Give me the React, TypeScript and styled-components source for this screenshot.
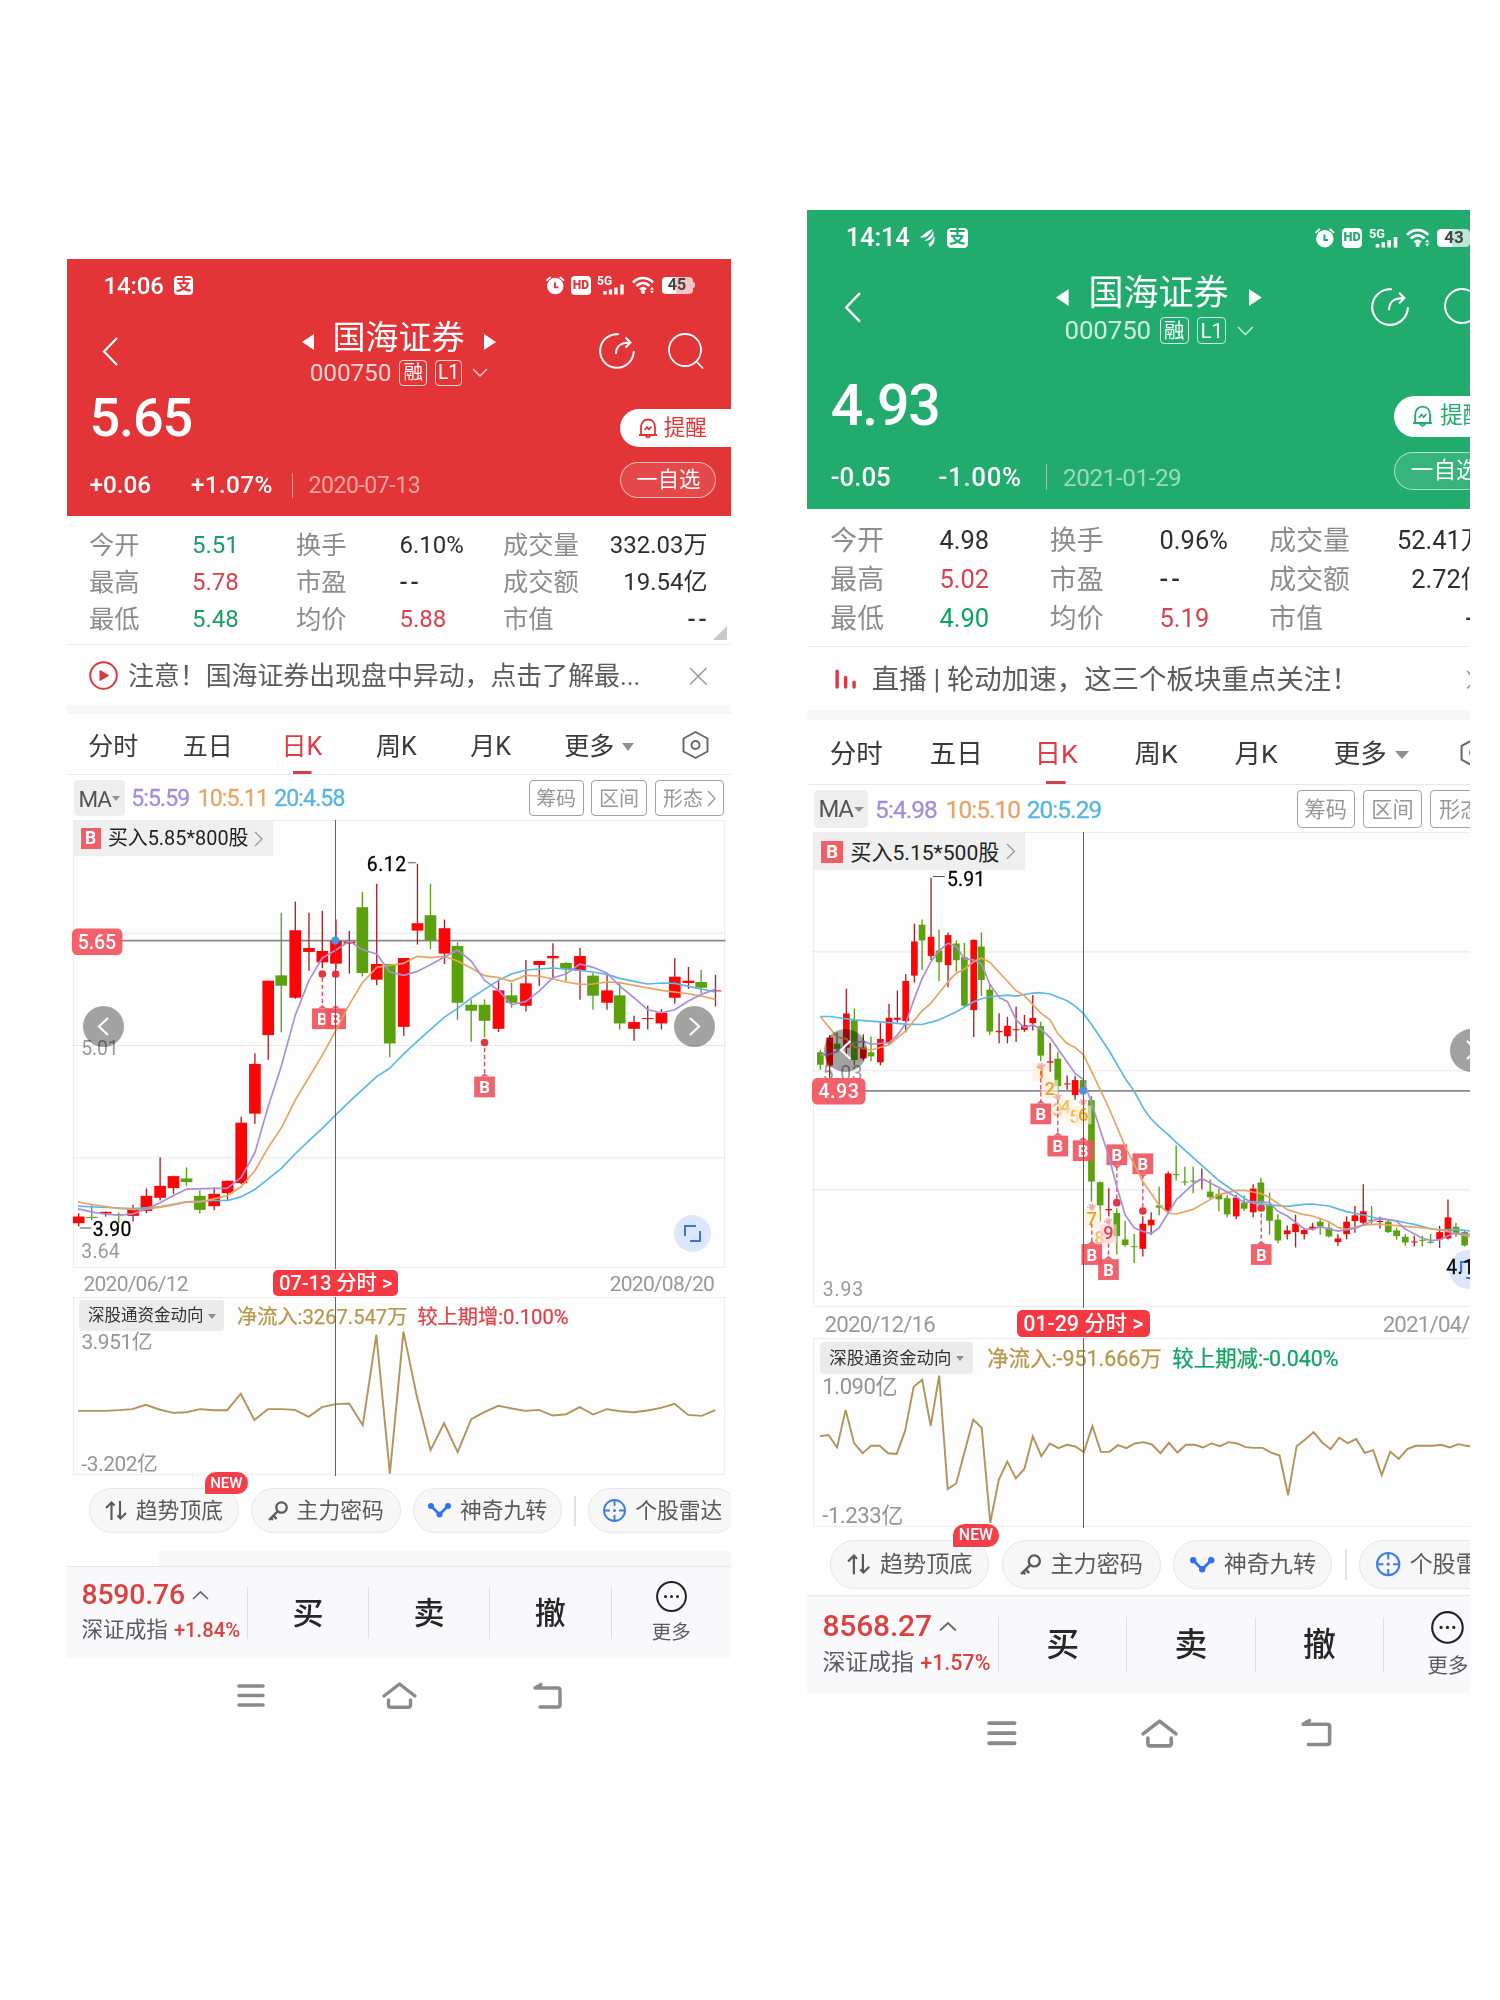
import React from 'react';
import styled, { createGlobalStyle, css } from 'styled-components';

/* One design unit; each phone sets its own --u so the same layout can be shown at two sizes. */
const u = (n: number) => `calc(var(--u) * ${n})`;

const RED = '#e33537';
const GREEN = '#21ac6e';

const Global = createGlobalStyle`
  * { box-sizing: border-box; }
  body { margin: 0; background: #fff; }
`;

const Stage = styled.main`
  display: flex;
  align-items: flex-start;
  gap: 76px;
  width: 1500px;
  height: 2000px;
  padding-left: 67px;
  overflow: hidden;
  background: #fff;
  font-family: Roboto, 'Noto Sans CJK SC', sans-serif;
`;

const Frame = styled.section<{ $top: number; $width: number; $unit: number }>`
  --u: ${(p) => p.$unit}px;
  flex: none;
  width: ${(p) => p.$width}px;
  margin-top: ${(p) => p.$top}px;
  overflow: hidden;
`;

const Screen = styled.div`
  display: flex;
  flex-direction: column;
  width: ${u(664)};
  background: #fff;
  color: #333;
  white-space: nowrap;
  line-height: 1;
`;

/* ---------- header ---------- */

const Header = styled.header<{ $bg: string }>`
  background: ${(p) => p.$bg};
  color: #fff;
`;

const StatusBar = styled.div`
  display: flex;
  align-items: center;
  height: ${u(52)};
  padding: 0 ${u(38.5)} 0 ${u(36.5)};
`;

const Clock = styled.span`
  font-size: ${u(24)};
  font-weight: 500;
  letter-spacing: ${u(-0.1)};
  padding-top: ${u(1)};
  margin-right: ${u(10)};
`;

const PayIcon = styled.span<{ $fg: string }>`
  display: grid;
  place-items: center;
  width: ${u(19.5)};
  height: ${u(19)};
  border-radius: ${u(4)};
  background: #fff;
  color: ${(p) => p.$fg};
  font-size: ${u(16)};
  font-weight: 700;
`;

const StatusRight = styled.div`
  display: flex;
  align-items: center;
  margin-left: auto;
  gap: ${u(6.6)};
`;

const HdIcon = styled(PayIcon)`
  font-size: ${u(12)};
  font-weight: 900;
`;

const Battery = styled.span`
  display: grid;
  place-items: center;
  position: relative;
  width: ${u(31)};
  height: ${u(17)};
  border-radius: ${u(4)};
  background: linear-gradient(90deg, #fff 45%, rgba(255, 255, 255, 0.7) 45%);
  color: #444;
  font-size: ${u(16)};
  font-weight: 700;
  &::after {
    content: '';
    position: absolute;
    left: 100%;
    width: ${u(2)};
    height: ${u(6)};
    border-radius: 0 2px 2px 0;
    background: rgba(255, 255, 255, 0.7);
  }
`;

const Glyph = styled.svg<{ $w: number; $h: number }>`
  flex: none;
  display: block;
  width: ${(p) => u(p.$w)};
  height: ${(p) => u(p.$h)};
  fill: none;
  stroke: currentColor;
  overflow: visible;
`;

const TitleBar = styled.div`
  display: grid;
  grid-template-columns: ${u(130)} 1fr ${u(130)};
  align-items: center;
  height: ${u(80)};
  padding: 0 ${u(27)} 0 ${u(35)};
`;

const TitleStack = styled.div`
  display: flex;
  flex-direction: column;
  align-items: center;
  gap: ${u(4)};
  padding-top: ${u(4)};
  margin-right: ${u(9)};
`;

const TitleLine = styled.div`
  display: flex;
  align-items: center;
  gap: ${u(19)};
  height: ${u(36)};
  font-size: ${u(33)};
  svg { fill: #fff; stroke: none; margin-top: ${u(8)}; }
`;

const CodeLine = styled.div`
  display: flex;
  align-items: center;
  height: ${u(27)};
  gap: ${u(8)};
  font-size: ${u(24.4)};
  letter-spacing: ${u(-0.1)};
  color: rgba(255, 255, 255, 0.78);
`;

const MarketTag = styled.span`
  display: grid;
  place-items: center;
  width: ${u(27.5)};
  height: ${u(25.5)};
  border: 1.4px solid rgba(255, 255, 255, 0.8);
  border-radius: ${u(4)};
  color: #fff;
  font-size: ${u(19.5)};
`;

const TitleActions = styled.div`
  display: flex;
  justify-content: flex-end;
  gap: ${u(33.5)};
`;

const Quote = styled.div<{ $extra: number }>`
  display: flex;
  justify-content: space-between;
  height: ${(p) => u(124.7 + p.$extra)};
  padding: ${(p) => u(p.$extra)} 0 ${u(18.2)} ${u(22.5)};
`;

const QuoteFigures = styled.div`
  display: flex;
  flex-direction: column;
  justify-content: space-between;
`;

const Price = styled.div`
  font-size: ${u(54)};
  font-weight: 500;
  line-height: ${u(54)};
  letter-spacing: ${u(-1.1)};
`;

const ChangeRow = styled.div`
  display: flex;
  align-items: center;
  height: ${u(25)};
  font-size: ${u(24.3)};
  font-weight: 500;
`;

const Change = styled.span<{ $w: number; $track?: number }>`
  width: ${(p) => u(p.$w)};
  padding-top: ${u(1)};
  letter-spacing: ${(p) => u(p.$track || 0)};
`;

const QuoteDate = styled.span`
  padding: ${u(1)} 0 0 ${u(15.5)};
  border-left: 1px solid rgba(255, 255, 255, 0.45);
  line-height: ${u(24)};
  font-size: ${u(23)};
  font-weight: 400;
  letter-spacing: ${u(-0.45)};
  color: rgba(255, 255, 255, 0.55);
`;

const QuoteActions = styled.div`
  display: flex;
  flex-direction: column;
  justify-content: flex-end;
  gap: ${u(14.3)};
  width: ${u(110.7)};
`;

const AlertButton = styled.div<{ $fg: string }>`
  display: flex;
  align-items: center;
  gap: ${u(6)};
  height: ${u(38.4)};
  padding-left: ${u(17.5)};
  border-radius: ${u(20)} 0 0 ${u(20)};
  background: #fff;
  color: ${(p) => p.$fg};
  font-size: ${u(21.5)};
`;

const WatchButton = styled.div`
  display: grid;
  place-items: center;
  width: ${u(96)};
  height: ${u(36)};
  padding-top: ${u(1)};
  border: 1px solid rgba(255, 255, 255, 0.6);
  border-radius: ${u(18)};
  background: rgba(255, 255, 255, 0.1);
  font-size: ${u(21.3)};
`;

/* ---------- statistics ---------- */

const Stats = styled.div`
  position: relative;
  display: grid;
  grid-template-columns: ${u(103)} ${u(104)} ${u(103.5)} ${u(103.5)} ${u(90)} 1fr;
  grid-auto-rows: ${u(37)};
  align-items: center;
  height: ${u(129.8)};
  padding: ${u(11)} ${u(23.5)} 0 ${u(22)};
  border-bottom: 1.5px solid #ececec;
  font-size: ${u(24)};
`;

const StatLabel = styled.span`
  padding-top: ${u(0.6)};
  color: #8c8c8c;
  font-size: ${u(25.3)};
`;

const StatValue = styled.span<{ $tone?: string; $end?: boolean; $dash?: boolean }>`
  color: ${(p) => p.$tone || '#2e2e2e'};
  text-align: ${(p) => (p.$end ? 'right' : 'left')};
  ${(p) => p.$dash && css`
    font-weight: 500;
    letter-spacing: ${u(2.8)};
    margin-right: ${u(-2)};
  `}
`;

const ExpandCorner = styled.i`
  position: absolute;
  right: ${u(4)};
  bottom: ${u(4)};
  border-style: solid;
  border-width: 0 0 ${u(14)} ${u(14)};
  border-color: transparent transparent #c9c9c9 transparent;
`;

/* ---------- notice + tabs ---------- */

const Notice = styled.div`
  display: flex;
  align-items: center;
  height: ${u(59.7)};
  padding: ${u(1)} ${u(25)} 0 ${u(22)};
  color: #5c5c5c;
  font-size: ${u(25.9)};
`;

const NoticeIcon = styled.span`
  display: flex;
  justify-content: center;
  width: ${u(29)};
  margin-right: ${u(10)};
  color: #dc3742;
`;

const NoticeText = styled.span`
  flex: 1;
  padding-top: ${u(3)};
`;

const Band = styled.div`
  height: ${u(8.7)};
  background: #f7f7f7;
`;

const Tabs = styled.nav`
  display: grid;
  grid-template-columns: repeat(5, ${u(94.3)}) ${u(123)} 1fr;
  height: ${u(61.6)};
  margin-left: ${u(-1)};
  padding-left: ${u(0.2)};
  border-bottom: 1.5px solid #e9e9e9;
  font-size: ${u(25)};
`;

const Tab = styled.div<{ $active?: boolean }>`
  display: flex;
  align-items: center;
  justify-content: center;
  gap: ${u(8)};
  padding-top: ${u(5.5)};
  color: ${(p) => (p.$active ? '#e23943' : '#3a3a3a')};
  svg { margin-top: ${u(-3)}; }
  ${(p) =>
    p.$active &&
    css`
      background: linear-gradient(#c9454d, #c9454d) center bottom / ${u(18.5)} ${u(3)} no-repeat;
    `}
`;

const Caret = styled.i<{ $s: number }>`
  border-style: solid;
  border-width: ${(p) => u(p.$s)} ${(p) => u(p.$s * 0.85)} 0;
  border-color: #8f8f8f transparent transparent;
`;

/* ---------- moving average row ---------- */

const MaRow = styled.div`
  display: flex;
  align-items: center;
  height: ${u(44.7)};
  padding: ${u(0.6)} ${u(7.5)} 0 ${u(7)};
  font-size: ${u(23)};
`;

const MaPicker = styled.span`
  display: flex;
  align-items: center;
  justify-content: center;
  gap: ${u(1.5)};
  width: ${u(50.7)};
  height: ${u(36.4)};
  margin-right: ${u(6.5)};
  padding-top: ${u(1.5)};
  border-radius: ${u(4)};
  background: #eee;
  color: #555;
  font-size: ${u(22.5)};
  letter-spacing: ${u(-1.2)};
`;

const MaValue = styled.span<{ $c: string; $w: number }>`
  width: ${(p) => u(p.$w)};
  padding-top: ${u(1.8)};
  color: ${(p) => p.$c};
  letter-spacing: ${u(-0.85)};
  -webkit-text-stroke: 0.3px currentColor;
`;

const MaTools = styled.div`
  display: flex;
  gap: ${u(7.7)};
  margin-left: auto;
`;

const MaTool = styled.span<{ $w: number }>`
  display: flex;
  align-items: center;
  justify-content: center;
  gap: ${u(5)};
  width: ${(p) => u(p.$w)};
  height: ${u(36.4)};
  padding-top: ${u(1.5)};
  border: 1.2px solid #a0a0a0;
  border-radius: ${u(4)};
  color: #979797;
  font-size: ${u(20)};
`;

/* ---------- charts ---------- */

const ChartBox = styled.div<{ $h: number }>`
  position: relative;
  height: ${(p) => u(p.$h)};
  margin: 0 ${u(6)} 0 ${u(5.5)};
  border: 1.5px solid #ececec;
  background: #fdfdfd;
`;

const Plot = styled.svg`
  position: absolute;
  inset: -1.5px;
  width: calc(100% + 3px);
  height: calc(100% + 3px);
`;

const TradeNote = styled.div`
  position: absolute;
  left: 0;
  top: 0;
  display: flex;
  align-items: center;
  gap: ${u(7)};
  width: ${u(199.5)};
  height: ${u(35)};
  padding-left: ${u(7)};
  background: #efefef;
  color: #222;
  font-size: ${u(19.9)};
`;

const TradeText = styled.span`
  padding-top: ${u(1.5)};
`;

const BuyBadge = styled.b`
  display: grid;
  place-items: center;
  width: ${u(20.4)};
  height: ${u(20.4)};
  background: #ef5f68;
  color: #fff;
  font-size: ${u(17.5)};
`;

const RoundButton = styled.span<{ $x: number; $y: number; $s: number; $bg: string; $fg: string; $blend?: boolean }>`
  position: absolute;
  left: ${(p) => u(p.$x)};
  top: ${(p) => u(p.$y)};
  display: grid;
  place-items: center;
  width: ${(p) => u(p.$s)};
  height: ${(p) => u(p.$s)};
  border-radius: 50%;
  background: ${(p) => p.$bg};
  color: ${(p) => p.$fg};
  mix-blend-mode: ${(p) => (p.$blend ? 'multiply' : 'normal')};
`;

const DateRow = styled.div`
  position: relative;
  display: flex;
  align-items: center;
  justify-content: space-between;
  height: ${u(29.3)};
  margin: 0 ${u(6)} 0 ${u(5.5)};
  padding: ${u(3)} ${u(11)} 0 ${u(11)};
  color: #999;
  font-size: ${u(21)};
  letter-spacing: ${u(-0.75)};
`;

const DatePill = styled.span<{ $x: number }>`
  position: absolute;
  left: ${(p) => u(p.$x - 62.5)};
  top: ${u(2.2)};
  display: grid;
  place-items: center;
  width: ${u(125)};
  height: ${u(25.7)};
  border-radius: ${u(5)};
  background: #f63842;
  color: #fff;
  font-size: ${u(20.3)};
  font-weight: 500;
  letter-spacing: ${u(-0.1)};
`;

const FlowHead = styled.div`
  position: relative;
  display: flex;
  align-items: center;
  padding: ${u(2)} 0 0 ${u(5.5)};
  font-size: ${u(20.2)};
`;

const FlowPicker = styled.span`
  display: flex;
  align-items: center;
  gap: ${u(4)};
  width: ${u(145)};
  height: ${u(30.7)};
  margin-right: ${u(13)};
  padding: ${u(1.5)} 0 0 ${u(9)};
  border-radius: ${u(4)};
  background: #ebebeb;
  color: #333;
  font-size: ${u(16.5)};
`;

const FlowValue = styled.span<{ $c: string }>`
  padding-top: ${u(2)};
  margin-right: ${u(10)};
  color: ${(p) => p.$c};
  -webkit-text-stroke: 0.25px currentColor;
`;

/* ---------- feature chips ---------- */

const Chips = styled.div`
  display: flex;
  align-items: center;
  gap: ${u(12)};
  padding: ${u(12.4)} 0 0 ${u(22)};
`;

const Chip = styled.div`
  position: relative;
  flex: none;
  display: flex;
  align-items: center;
  justify-content: center;
  gap: ${u(9)};
  width: ${u(149.8)};
  height: ${u(45.6)};
  border: 1.3px solid #e6e6e6;
  border-radius: ${u(23)};
  background: #f7f7f7;
  color: #5a5a5a;
  font-size: ${u(21.8)};
`;

const NewTag = styled.span`
  position: absolute;
  right: ${u(-11)};
  top: ${u(-17.5)};
  display: grid;
  place-items: center;
  width: ${u(45)};
  height: ${u(23.5)};
  border: 1px solid #fff;
  border-radius: ${u(12)} ${u(12)} ${u(12)} ${u(2)};
  background: #f43e4a;
  color: #fff;
  font-size: ${u(15)};
  font-weight: 500;
`;

const ChipRule = styled.i`
  flex: none;
  width: 1.5px;
  height: ${u(30)};
  background: #e2e2e2;
`;

const Gap = styled.div<{ $h: number }>`
  display: flex;
  align-items: flex-end;
  height: ${(p) => u(p.$h)};
`;

const Peek = styled.div`
  width: 100%;
  height: ${u(15)};
  margin-left: ${u(92)};
  border-radius: ${u(5)} 0 0 0;
  background: #f7f7f7;
`;

/* ---------- trading bar ---------- */

const TradeBar = styled.footer`
  display: grid;
  grid-template-columns: ${u(181)} ${u(121)} ${u(121)} ${u(121.5)} 1fr;
  height: ${u(92.4)};
  padding: ${u(20)} 0;
  border-top: 1.3px solid #e6e6e8;
  background: #f9f9fb;
`;

const IndexCell = styled.div`
  display: flex;
  flex-direction: column;
  justify-content: center;
  gap: ${u(10)};
  height: ${u(52)};
  padding-left: ${u(14.5)};
  padding-bottom: ${u(4)};
  border-right: 1.3px solid #dedee0;
`;

const IndexLine = styled.div`
  display: flex;
  align-items: center;
  gap: ${u(8)};
  color: #dc4140;
  font-size: ${u(28.3)};
  font-weight: 500;
  letter-spacing: ${u(-0.15)};
  svg { color: #666; }
`;

const IndexName = styled.div`
  display: flex;
  align-items: center;
  gap: ${u(6)};
  color: #5c5c60;
  font-size: ${u(21.6)};
`;

const IndexPct = styled.span`
  color: #dc4140;
  font-size: ${u(20.2)};
  font-weight: 500;
`;

const TradeCell = styled.div`
  display: grid;
  place-items: center;
  height: ${u(52)};
  padding-top: ${u(2)};
  border-right: 1.3px solid #dedee0;
  color: #262626;
  font-size: ${u(31)};
  font-weight: 500;
`;

const MoreCell = styled.div`
  display: flex;
  flex-direction: column;
  align-items: center;
  gap: ${u(11)};
  margin-top: ${u(-5.5)};
  color: #222;
  span { color: #5c5c60; font-size: ${u(19.5)}; }
`;

const SystemNav = styled.div`
  display: grid;
  grid-template-columns: ${u(148)} ${u(148)} ${u(148)};
  justify-content: center;
  justify-items: center;
  align-items: center;
  height: ${u(75.6)};
  color: #8a8a8a;
`;

/* ---------- chart drawing ---------- */

/* x, high, body top, body bottom, low, r|g */
type Candle = [number, number, number, number, number, 'r' | 'g'];

const candles = (src: string): Candle[] =>
  src
    .trim()
    .split(/\s+/)
    .map((row) => {
      const c = row.split(',');
      return [+c[0], +c[1], +c[2], +c[3], +c[4], c[5] as 'r' | 'g'];
    });

const series = (x0: number, step: number, ys: number[]) =>
  ys.map((y, i) => `${(x0 + step * i).toFixed(1)},${y}`).join(' ');

interface Mark {
  x: number;
  y: number;
  from?: number;
  dot?: number;
  below?: boolean;
}

interface Count {
  x: number;
  y: number;
  n: number;
  faint?: boolean;
}

interface Kline {
  box: [number, number, number, number];
  grid: number[];
  bodyWidth: number;
  candles: Candle[];
  ma5: string;
  ma10: string;
  ma20: string;
  cross: [number, number];
  crossLabel: string;
  marks: Mark[];
  counts: Count[];
  arcs: [number, number][];
  labels: { x: number; y: number; w?: number; t: string; c: string }[];
  leaders: string;
  pillTop: number;
}

interface PhoneData {
  top: number;
  width: number;
  unit: number;
  bg: string;
  time: string;
  swoosh: boolean;
  battery: string;
  extra: number;
  price: string;
  delta: string;
  pct: string;
  pctTrack: number;
  date: string;
  stats: [string, string, string?][];
  corner: boolean;
  notice: string;
  noticeKind: 'play' | 'bars';
  ma: string[];
  trade: string;
  k: Kline;
  prev: [number, number];
  next: [number, number];
  full: [number, number];
  from: string;
  to: string;
  pill: string;
  pillX: number;
  flow: string;
  flowDelta: string;
  flowTone: string;
  flowBox: [number, number, number, number];
  flowMax: string;
  flowMin: string;
  flowCross: number;
  flowPts: string;
  gap: number;
  peek: boolean;
  index: string;
  indexPct: string;
}

const UP = '#d9414c';
const DOWN = '#1a9f61';

const left: PhoneData = {
  top: 259,
  width: 664,
  unit: 1,
  bg: RED,
  time: '14:06',
  swoosh: false,
  battery: '45',
  extra: 0,
  price: '5.65',
  delta: '+0.06',
  pct: '+1.07%',
  pctTrack: 0.35,
  date: '2020-07-13',
  stats: [
    ['今开', '5.51', DOWN], ['换手', '6.10%'], ['成交量', '332.03万'],
    ['最高', '5.78', UP], ['市盈', '--'], ['成交额', '19.54亿'],
    ['最低', '5.48', DOWN], ['均价', '5.88', UP], ['市值', '--'],
  ],
  corner: true,
  notice: '注意！国海证券出现盘中异动，点击了解最...',
  noticeKind: 'play',
  ma: ['5:5.59', '10:5.11', '20:4.58'],
  trade: '买入5.85*800股',
  k: {
    box: [22, 28, 1958, 1344],
    grid: [367, 703, 1039],
    bodyWidth: 35,
    candles: candles(`
      42,1205,1215,1235,1245,r 81,1180,1216,1219,1226,g 123,1200,1201,1206,1215,r 162,1203,1208,1211,1235,g
      205,1180,1195,1213,1230,r 245,1131,1153,1198,1205,r 286,1038,1123,1159,1167,r 326,1093,1094,1130,1147,r
      365,1068,1101,1112,1123,g 405,1136,1153,1195,1206,g 448,1127,1147,1184,1196,r 488,1107,1108,1145,1165,r
      529,916,934,1115,1118,r 570,726,758,907,937,r 610,509,509,672,746,r 649,306,493,524,663,g
      691,272,358,560,563,r 732,306,411,423,479,r 772,300,420,454,472,r 813,326,390,458,474,r
      853,360,392,398,488,r 892,243,289,486,496,g 935,219,459,506,523,r 974,459,459,697,738,g
      1016,441,441,647,674,r 1057,159,337,359,401,r 1096,219,313,389,415,g 1138,326,352,428,459,r
      1177,394,405,575,626,g 1218,565,581,599,692,g 1258,565,581,629,678,g 1300,510,538,653,663,r
      1339,515,553,575,590,g 1382,447,517,584,601,r 1422,450,450,462,525,r 1463,397,435,442,500,r
      1502,453,456,474,511,g 1544,411,435,479,566,r 1583,486,494,554,596,g 1625,490,538,575,596,r
      1663,517,553,637,655,g 1706,614,633,653,689,r 1747,584,621,624,655,r 1788,594,605,637,655,r
      1828,441,497,560,577,r 1869,468,509,516,534,r 1907,477,513,530,546,g 1950,492,538,541,586,r`),
    ma5: '40,1192 81,1201 123,1208 162,1211 205,1207 245,1192 286,1174 326,1152 365,1133 488,1130 529,1098 570,1024 610,885 649,765 691,612 732,508 772,441 813,417 853,391 892,416 935,429 974,483 1016,493 1057,481 1096,461 1138,438 1177,417 1218,450 1258,508 1300,538 1339,581 1382,571 1422,540 1463,500 1502,489 1544,459 1583,469 1625,486 1663,525 1706,560 1747,596 1788,605 1828,596 1869,570 1907,550 1950,535',
    ma10: '40,1171 81,1179 123,1185 162,1191 205,1194 245,1193 286,1187 326,1180 365,1172 405,1171 448,1162 488,1152 529,1126 570,1078 610,1008 649,950 691,866 732,798 772,732 813,657 853,580 892,515 935,469 1016,457 1057,436 1096,440 1138,436 1177,450 1218,471 1258,494 1300,500 1339,511 1382,493 1422,495 1463,504 1502,513 1544,520 1583,519 1625,513 1663,515 1706,523 1788,538 1869,548 1907,555 1950,565',
    ma20: '40,1184 123,1188 205,1191 286,1186 365,1171 448,1167 488,1167 529,1156 570,1134 610,1102 649,1071 691,1027 732,988 772,951 813,910 853,871 935,796 974,771 1016,728 1057,690 1138,618 1177,592 1218,561 1258,535 1300,508 1339,489 1382,477 1463,471 1544,478 1583,483 1625,490 1663,502 1706,511 1747,519 1788,516 1828,517 1869,526 1950,543',
    cross: [811, 389],
    crossLabel: '5.65',
    marks: [
      { x: 772, y: 623, from: 500, dot: 489 },
      { x: 812, y: 623, dot: 489 },
      { x: 1258, y: 827, from: 710, dot: 694 },
    ],
    counts: [],
    arcs: [],
    labels: [
      { x: 905, y: 181, w: 118, t: '6.12', c: '#000' },
      { x: 84, y: 1274, w: 116, t: '3.90', c: '#000' },
      { x: 50, y: 732, w: 112, t: '5.01', c: '#999' },
      { x: 50, y: 1340, w: 115, t: '3.64', c: '#999' },
    ],
    leaders: 'M1028 156h24 M46 1249h34',
    pillTop: 353,
  },
  prev: [10.7, 186],
  next: [601.6, 186],
  full: [601.5, 395],
  from: '2020/06/12',
  to: '2020/08/20',
  pill: '07-13 分时 >',
  pillX: 263,
  flow: '净流入:3267.547万',
  flowDelta: '较上期增:0.100%',
  flowTone: '#e0424b',
  flowBox: [29, 112, 1504, 533],
  flowMax: '3.951亿',
  flowMin: '-3.202亿',
  flowCross: 635,
  flowPts: series(43, 31.2, [451, 451, 451, 449, 446, 433, 447, 457, 455, 446, 449, 449, 400, 478, 446, 446, 448, 469, 440, 431, 429, 494, 224, 638, 215, 410, 568, 488, 574, 476, 454, 436, 444, 451, 448, 465, 461, 440, 462, 446, 452, 455, 450, 442, 430, 463, 466, 449]),
  gap: 32.3,
  peek: true,
  index: '8590.76',
  indexPct: '+1.84%',
};

const right: PhoneData = {
  top: 210,
  width: 663,
  unit: 1.0605,
  bg: GREEN,
  time: '14:14',
  swoosh: true,
  battery: '43',
  extra: 25.7,
  price: '4.93',
  delta: '-0.05',
  pct: '-1.00%',
  pctTrack: 0.7,
  date: '2021-01-29',
  stats: [
    ['今开', '4.98'], ['换手', '0.96%'], ['成交量', '52.41万'],
    ['最高', '5.02', UP], ['市盈', '--'], ['成交额', '2.72亿'],
    ['最低', '4.90', '#0ca45e'], ['均价', '5.19', UP], ['市值', '--'],
  ],
  corner: false,
  notice: '直播 | 轮动加速，这三个板块重点关注！',
  noticeKind: 'bars',
  ma: ['5:4.98', '10:5.10', '20:5.29'],
  trade: '买入5.15*500股',
  k: {
    box: [22, -24, 2078, 1422],
    grid: [334, 689, 1045],
    bodyWidth: 20,
    candles: candles(`
      47,627,634,671,686,g 75,582,590,672,710,r 97,575,608,624,632,g 125,444,518,620,640,r 149,503,538,657,672,g
      176,580,620,652,658,r 199,587,634,646,661,g 227,547,594,664,673,r 253,489,531,605,613,r 278,450,531,537,545,r
      303,400,421,541,574,r 329,250,303,405,426,r 352,237,253,300,388,g 379,113,289,346,358,r 403,267,330,365,421,g
      430,276,284,374,440,r 455,300,309,359,393,g 479,307,350,495,500,g 507,297,298,508,588,r 530,276,318,418,465,g
      555,430,447,572,583,g 583,517,570,574,607,r 608,528,555,586,607,r 634,497,565,568,603,r 659,522,553,567,573,r
      684,463,531,547,569,r 708,543,556,644,661,g 736,606,661,665,692,r 759,632,653,735,756,g 787,703,727,730,746,r
      811,704,717,762,776,r 835,717,717,750,760,g 860,764,777,1020,1080,g 886,1020,1022,1091,1139,g 912,1040,1102,1106,1124,r
      936,1100,1114,1183,1238,g 961,1137,1193,1210,1215,g 988,1177,1213,1215,1263,g 1014,1124,1146,1221,1244,r 1039,1112,1134,1151,1180,r
      1063,1035,1091,1098,1121,g 1090,990,996,1107,1112,r 1114,912,998,1001,1017,g 1140,976,1020,1022,1032,g 1165,976,1017,1020,1055,g
      1191,981,1013,1015,1043,r 1216,1014,1050,1067,1072,g 1242,1042,1057,1073,1109,g 1267,1060,1070,1118,1127,g 1294,1060,1068,1124,1133,r
      1318,1062,1083,1101,1107,g 1345,1028,1041,1112,1127,r 1368,1009,1023,1085,1095,g 1394,1053,1090,1137,1179,g 1419,1118,1134,1196,1204,g
      1447,1151,1166,1177,1193,r 1472,1119,1146,1171,1217,r 1498,1160,1165,1177,1193,r 1523,1143,1155,1161,1166,r 1546,1130,1140,1155,1179,g
      1572,1143,1158,1184,1187,g 1599,1177,1190,1201,1212,r 1625,1124,1140,1177,1193,r 1650,1093,1121,1138,1173,r 1675,1028,1109,1143,1147,r
      1700,1093,1134,1138,1150,g 1725,1125,1138,1140,1160,r 1750,1135,1140,1171,1174,g 1775,1158,1166,1183,1193,g 1801,1177,1185,1202,1212,g
      1828,1182,1199,1201,1214,r 1852,1182,1194,1197,1214,g 1877,1177,1200,1203,1205,g 1904,1152,1171,1193,1218,r 1929,1074,1127,1190,1193,r
      1953,1144,1155,1177,1186,g 1979,1166,1171,1211,1214,g`),
    ma5: '47,642 75,640 97,632 125,608 149,606 176,601 199,610 253,605 278,583 303,548 329,473 352,414 379,363 403,331 430,308 455,318 479,355 507,358 530,370 555,430 583,470 608,482 634,537 659,560 684,552 708,565 736,590 811,697 835,715 860,785 912,945 936,1035 961,1120 988,1158 1014,1169 1039,1176 1063,1158 1114,1075 1165,1028 1191,1011 1242,1038 1294,1066 1318,1083 1345,1080 1394,1083 1419,1109 1447,1123 1498,1161 1523,1163 1546,1155 1599,1168 1650,1160 1725,1129 1775,1138 1801,1162 1852,1189 1877,1196 1904,1194 1945,1175 1998,1178',
    ma10: '47,528 97,588 125,594 149,618 199,627 253,612 303,570 352,510 379,487 430,423 455,397 479,386 507,363 530,352 555,365 634,450 659,465 708,517 736,537 759,578 787,608 811,620 835,640 860,690 912,800 961,915 1014,1020 1063,1090 1090,1114 1114,1117 1165,1103 1216,1074 1242,1059 1294,1047 1318,1046 1368,1056 1394,1068 1447,1104 1498,1119 1523,1123 1572,1140 1599,1157 1625,1163 1675,1150 1725,1147 1801,1154 1852,1158 1904,1164 1953,1175 1998,1185',
    ma20: '47,527 75,527 97,530 149,537 227,543 303,550 352,551 403,537 455,513 507,483 530,474 555,468 608,463 634,466 684,457 708,456 736,460 787,480 811,496 835,517 860,550 912,628 961,712 988,750 1018,805 1039,833 1063,857 1090,880 1114,903 1191,972 1242,1017 1318,1070 1345,1085 1394,1090 1447,1094 1498,1088 1523,1087 1572,1093 1625,1110 1675,1120 1725,1132 1775,1137 1801,1143 1828,1148 1877,1161 1904,1165 1953,1163 1998,1168',
    cross: [835, 749],
    crossLabel: '4.93',
    marks: [
      { x: 708, y: 818, from: 690 },
      { x: 759, y: 914, from: 775 },
      { x: 835, y: 928 },
      { x: 861, y: 1238, from: 1145 },
      { x: 911, y: 1283, from: 1205 },
      { x: 936, y: 940, dot: 1083, from: 1072, below: true },
      { x: 1014, y: 967, dot: 1108, from: 1097, below: true },
      { x: 1369, y: 1238, from: 1115, dot: 1099 },
    ],
    counts: [
      { x: 709, y: 710, n: 1 },
      { x: 735, y: 761, n: 2 },
      { x: 758, y: 824, n: 3, faint: true },
      { x: 782, y: 814, n: 4, faint: true },
      { x: 809, y: 845, n: 5, faint: true },
      { x: 835, y: 838, n: 6 },
      { x: 861, y: 1149, n: 7 },
      { x: 884, y: 1208, n: 8, faint: true },
      { x: 911, y: 1193, n: 9 },
    ],
    arcs: [[709, 677], [759, 768], [835, 784], [861, 1097], [911, 1140]],
    labels: [
      { x: 427, y: 136, w: 114, t: '5.91', c: '#000' },
      { x: 54, y: 717, w: 120, t: '5.03', c: '#999' },
      { x: 54, y: 1363, w: 121, t: '3.93', c: '#999' },
      { x: 1924, y: 1296, w: 116, t: '4.17', c: '#000' },
    ],
    leaders: 'M384 109h36',
    pillTop: 711,
  },
  prev: [11, 185.8],
  next: [601, 185.8],
  full: [600.8, 394.6],
  from: '2020/12/16',
  to: '2021/04/16',
  pill: '01-29 分时 >',
  pillX: 255,
  flow: '净流入:-951.666万',
  flowDelta: '较上期减:-0.040%',
  flowTone: '#13a463',
  flowBox: [29.5, 112, 1592, 565],
  flowMax: '1.090亿',
  flowMin: '-1.233亿',
  flowCross: 654,
  flowPts: series(48, 19.55, [404, 401, 438, 326, 425, 455, 433, 433, 455, 457, 388, 257, 236, 374, 224, 562, 545, 449, 355, 380, 662, 534, 480, 530, 502, 405, 464, 426, 440, 430, 435, 452, 374, 451, 451, 431, 440, 426, 422, 429, 455, 424, 453, 430, 430, 438, 426, 434, 422, 426, 437, 439, 439, 453, 462, 580, 434, 414, 392, 423, 443, 409, 425, 413, 454, 446, 520, 450, 472, 443, 433, 433, 433, 430, 438, 428, 433, 436]),
  gap: 6,
  peek: false,
  index: '8568.27',
  indexPct: '+1.57%',
};

function BuyMark({ x, y, from, dot, below }: Mark) {
  return (
    <g>
      {from && (
        <path
          d={`M${x} ${from}V${below ? y + 34 : y - 34}`}
          stroke="#d8505e"
          strokeWidth={4}
          strokeDasharray="13 8"
        />
      )}
      {dot && <circle cx={x} cy={dot} r={11.5} fill="#e23743" />}
      <g opacity={0.92}>
        <rect x={x - 31} y={y - 31} width={62} height={62} fill="#ef5560" />
        <path
          d={below ? `M${x - 13} ${y + 31}l13 10l13 -10z` : `M${x - 13} ${y - 31}l13 -10l13 10z`}
          fill="#ef5560"
        />
      </g>
      <text x={x} y={y + 18} fontSize={50} fontWeight={700} fill="#fff" textAnchor="middle">
        B
      </text>
    </g>
  );
}

function KlinePlot({ k }: { k: Kline }) {
  const [bx, by, bw, bh] = k.box;
  const [cx, cy] = k.cross;
  return (
    <Plot viewBox={k.box.join(' ')} preserveAspectRatio="none" fill="none">
      {k.grid.map((y) => (
        <path key={y} d={`M${bx} ${y}h${bw}`} stroke="#e8e8e8" strokeWidth={3.5} />
      ))}
      <path d={`M${bx} ${cy}h${bw}`} stroke="#868b92" strokeWidth={5} />
      {k.labels.filter((l) => l.c === '#999').map((l) => (
        <text key={l.t} x={l.x} y={l.y} fontSize={58} fill={l.c} textLength={l.w}>
          {l.t}
        </text>
      ))}
      {k.candles.map(([x, hi, a, b, lo, d], i) => (
        <g key={i}>
          <path d={`M${x} ${hi}V${lo}`} stroke={d === 'r' ? '#a81f24' : '#5a9e14'} strokeWidth={4} />
          <rect
            x={x - k.bodyWidth / 2}
            y={a}
            width={k.bodyWidth}
            height={Math.max(3, b - a)}
            fill={d === 'r' ? '#fb0507' : '#5aa10c'}
          />
        </g>
      ))}
      {k.counts.map((c) => (
        <g key={c.n} opacity={c.faint ? 0.7 : 1}>
          <rect x={c.x - 25} y={c.y - 45} width={50} height={56} fill={c.n === 9 ? '#fbd0d5' : '#fdf0dc'} opacity={0.65} />
          <text x={c.x} y={c.y} fontSize={55} fontWeight={500} fill={c.n === 9 ? '#e0424e' : '#f0a023'} textAnchor="middle">
            {c.n}
          </text>
        </g>
      ))}
      {k.marks.map((m) => (
        <BuyMark key={m.x} {...m} />
      ))}
      {k.arcs.map(([x, y]) => (
        <g key={x}>
          <circle cx={x} cy={y} r={8} fill="#f3a9ac" />
          <path d={`M${x - 12} ${y + 2}a12 12 0 0 1 24 0`} stroke="#e88b92" strokeWidth={3} strokeDasharray="5 4" />
        </g>
      ))}
      <g strokeWidth={5} strokeLinejoin="round">
        <polyline points={k.ma20} stroke="#5cb8e2" />
        <polyline points={k.ma10} stroke="#eaa363" />
        <polyline points={k.ma5} stroke="#a98fd8" />
      </g>
      <path d={`M${cx} ${by}v${bh}`} stroke="#596473" strokeWidth={3} shapeRendering="crispEdges" />
      <circle cx={cx} cy={cy} r={12} fill="#4f93dc" />
      <path d={k.leaders} stroke="#555" strokeWidth={3} />
      {k.labels.filter((l) => l.c !== '#999').map((l) => (
        <text key={l.t} x={l.x} y={l.y} fontSize={58} fill={l.c} stroke={l.c} strokeWidth={0.8} textLength={l.w}>
          {l.t}
        </text>
      ))}
      <rect x={bx} y={k.pillTop} width={151 * (bw / 1958)} height={79} rx={16} fill="#f45b65" opacity={0.96} />
      <text
        x={bx + 75 * (bw / 1958)}
        y={k.pillTop + 60}
        fontSize={59}
        fontWeight={500}
        fill="#fff"
        textAnchor="middle"
        textLength={115 * (bw / 1958)}
      >
        {k.crossLabel}
      </text>
    </Plot>
  );
}

function FlowPlot({ d }: { d: PhoneData }) {
  const [, y, , h] = d.flowBox;
  return (
    <Plot viewBox={d.flowBox.join(' ')} preserveAspectRatio="none" fill="none">
      <polyline points={d.flowPts} stroke="#b1935c" strokeWidth={1.9} vectorEffect="non-scaling-stroke" />
      <path
        d={`M${d.flowCross} ${y}v${h}`}
        stroke="#596473"
        strokeWidth={1}
        vectorEffect="non-scaling-stroke"
        shapeRendering="crispEdges"
      />
    </Plot>
  );
}

const FlowScale = styled.span<{ $bottom?: boolean }>`
  position: absolute;
  left: ${u(8)};
  ${(p) => (p.$bottom ? css`bottom: ${u(-0.5)};` : css`top: ${u(34)};`)}
  color: #949494;
  font-size: ${u(20.8)};
  letter-spacing: ${u(-0.4)};
`;

function Phone({ d }: { d: PhoneData }) {
  return (
    <Frame $top={d.top} $width={d.width} $unit={d.unit}>
      <Screen>
        <Header $bg={d.bg}>
          <StatusBar>
            <Clock>{d.time}</Clock>
            {d.swoosh && (
              <Glyph $w={14} $h={17} viewBox="0 0 14 17" style={{ marginRight: 12 }}>
                <path d="M0 8C3 6 6 2 12 0C10 5 6 9 0 8z M4 11C8 9 11 6 12.500 2C14 7 10 12 4 11z M8 14C11 12 13 9 13 6C15 11 13 15 9 17z" fill="#fff" stroke="none" />
              </Glyph>
            )}
            <PayIcon $fg={d.bg}>支</PayIcon>
            <StatusRight>
              <Glyph $w={18.5} $h={18.5} viewBox="0 0 18 18">
                <circle cx="9" cy="9.800" r="8" fill="#fff" stroke="none" />
                <path d="M1 4L4 1.300M17 4L14 1.300" stroke="#fff" strokeWidth="1.700" strokeLinecap="round" />
                <path d="M8.700 6V11H12" stroke={d.bg} strokeWidth="1.800" />
              </Glyph>
              <HdIcon $fg={d.bg}>HD</HdIcon>
              <Glyph $w={28} $h={19} viewBox="0 0 28 19">
                <text x="0" y="9" fontSize="12" fontWeight="700" fill="#fff" stroke="none">5G</text>
                <path d="M8 18.500V15M13.500 18.500V13.500M19 18.500V11.500M25 18.500V8.500" stroke="#fff" strokeWidth="3.400" />
              </Glyph>
              <Glyph $w={23} $h={18} viewBox="0 0 23 18">
                <path d="M1 6.500C6.500 .5 15.500 .5 21 6.500M4.500 10C8.500 6 13.500 6 17.500 10M8 13.500Q11 11 14 13.500" strokeWidth="2.700" />
                <circle cx="11" cy="16" r="2" fill="#fff" stroke="none" />
                <path d="M18 13.500l2-2.600 2 2.600zM18 14.800l2 2.600 2-2.600z" fill="#fff" stroke="none" />
              </Glyph>
              <Battery>{d.battery}</Battery>
            </StatusRight>
          </StatusBar>
          <TitleBar>
            <Glyph $w={16} $h={29} viewBox="0 0 16 29">
              <path d="M15 1L2 14.500L15 28" strokeWidth="2.200" />
            </Glyph>
            <TitleStack>
              <TitleLine>
                <Glyph $w={12} $h={16} viewBox="0 0 12 16"><path d="M12 0V16L0 8z" /></Glyph>
                国海证券
                <Glyph $w={12} $h={16} viewBox="0 0 12 16"><path d="M0 0V16L12 8z" /></Glyph>
              </TitleLine>
              <CodeLine>
                000750
                <MarketTag>融</MarketTag>
                <MarketTag>L1</MarketTag>
                <Glyph $w={14} $h={8} viewBox="0 0 14 8" style={{ marginLeft: 3 }}>
                  <path d="M0 0L7 7L14 0" strokeWidth="1.300" />
                </Glyph>
              </CodeLine>
            </TitleStack>
            <TitleActions>
              <Glyph $w={36} $h={36} viewBox="0 0 36 36" strokeWidth="2">
                <path d="M19 1.200A16.800 16.800 0 1 0 34.700 19" strokeLinecap="round" />
                <path d="M17 21C17 13 21 9.500 31 9.500M26.500 4.500L31.500 9.500L26.500 14.500" />
              </Glyph>
              <Glyph $w={36} $h={36} viewBox="0 0 36 36" strokeWidth="1.800">
                <circle cx="17" cy="17" r="16" />
                <path d="M28 28L35 35.500" />
              </Glyph>
            </TitleActions>
          </TitleBar>
          <Quote $extra={d.extra}>
            <QuoteFigures>
              <Price>{d.price}</Price>
              <ChangeRow>
                <Change $w={101.5}>{d.delta}</Change>
                <Change $w={101} $track={d.pctTrack}>{d.pct}</Change>
                <QuoteDate>{d.date}</QuoteDate>
              </ChangeRow>
            </QuoteFigures>
            <QuoteActions>
              <AlertButton $fg={d.bg}>
                <Glyph $w={20} $h={21} viewBox="0 0 20 21" strokeWidth="1.800">
                  <path d="M1 17H19M3 17V9.500C3 4.500 6 1.500 10 1.500S17 4.500 17 9.500V17M7.500 17.500Q10 21.500 12.500 17.500" />
                  <path d="M6.500 12L9 9L11 11.500L13.500 8.500" strokeWidth="1.600" />
                </Glyph>
                提醒
              </AlertButton>
              <WatchButton>一自选</WatchButton>
            </QuoteActions>
          </Quote>
        </Header>

        <Stats>
          {d.stats.map(([label, value, tone], i) => (
            <React.Fragment key={label}>
              <StatLabel>{label}</StatLabel>
              <StatValue $tone={tone} $end={i % 3 === 2} $dash={value === '--'}>{value}</StatValue>
            </React.Fragment>
          ))}
          {d.corner && <ExpandCorner />}
        </Stats>

        <Notice>
          <NoticeIcon>
            {d.noticeKind === 'play' ? (
              <Glyph $w={29} $h={29} viewBox="0 0 29 29">
                <circle cx="14.500" cy="14.500" r="13.300" strokeWidth="2" />
                <path d="M11 9.500L19.500 14.500L11 19.500z" fill="currentColor" strokeWidth="1" />
              </Glyph>
            ) : (
              <Glyph $w={20} $h={19} viewBox="0 0 20 19" strokeWidth="3.200" strokeLinecap="round">
                <path d="M2 2V17M10 8V17M18 12.500V17" />
              </Glyph>
            )}
          </NoticeIcon>
          <NoticeText>{d.notice}</NoticeText>
          <Glyph $w={16.5} $h={16.5} viewBox="0 0 16 16" color="#999">
            <path d="M0 0L16 16M16 0L0 16" strokeWidth="1.500" />
          </Glyph>
        </Notice>
        <Band />

        <Tabs>
          <Tab>分时</Tab>
          <Tab>五日</Tab>
          <Tab $active>日K</Tab>
          <Tab>周K</Tab>
          <Tab>月K</Tab>
          <Tab>更多<Caret $s={8} /></Tab>
          <Tab>
            <Glyph $w={27} $h={28} viewBox="0 0 27 28" color="#666" strokeWidth="1.900" strokeLinejoin="round">
              <path d="M13.500 1L25.500 7.500V20.500L13.500 27L1.500 20.500V7.500z" />
              <circle cx="13.500" cy="14" r="4" />
            </Glyph>
          </Tab>
        </Tabs>

        <MaRow>
          <MaPicker>MA<Caret $s={5.6} /></MaPicker>
          <MaValue $c="#a58cdb" $w={66.5}>{d.ma[0]}</MaValue>
          <MaValue $c="#e9a468" $w={76.5}>{d.ma[1]}</MaValue>
          <MaValue $c="#54b6e4" $w={80}>{d.ma[2]}</MaValue>
          <MaTools>
            <MaTool $w={55}>筹码</MaTool>
            <MaTool $w={55.5}>区间</MaTool>
            <MaTool $w={69}>
              形态
              <Glyph $w={7} $h={15} viewBox="0 0 7 15"><path d="M0 0L7 7.500L0 15" strokeWidth="1.300" /></Glyph>
            </MaTool>
          </MaTools>
        </MaRow>

        <ChartBox $h={448}>
          <KlinePlot k={d.k} />
          <TradeNote>
            <BuyBadge>B</BuyBadge>
            <TradeText>{d.trade}</TradeText>
            <Glyph $w={7} $h={14} viewBox="0 0 7 14" color="#999"><path d="M0 0L7 7L0 14" strokeWidth="1.300" /></Glyph>
          </TradeNote>
          <RoundButton $x={d.prev[0] - 1.5} $y={d.prev[1] - 1.5} $s={41} $bg="rgba(0,0,0,.36)" $fg="#fff">
            <Glyph $w={9} $h={17} viewBox="0 0 9 17"><path d="M9 0L0 8.500L9 17" strokeWidth="2.200" /></Glyph>
          </RoundButton>
          <RoundButton $x={d.next[0] - 1.5} $y={d.next[1] - 1.5} $s={41} $bg="rgba(0,0,0,.36)" $fg="#fff">
            <Glyph $w={9} $h={17} viewBox="0 0 9 17"><path d="M0 0L9 8.500L0 17" strokeWidth="2.200" /></Glyph>
          </RoundButton>
          <RoundButton $x={d.full[0] - 1.5} $y={d.full[1] - 1.5} $s={37} $bg="#dfe9fd" $fg="#3a78d0" $blend>
            <Glyph $w={17} $h={17} viewBox="0 0 17 17" strokeWidth="2">
              <path d="M1 11V1H12M16 6V16H6" />
            </Glyph>
          </RoundButton>
        </ChartBox>

        <DateRow>
          <span>{d.from}</span>
          <span>{d.to}</span>
          <DatePill $x={d.pillX}>{d.pill}</DatePill>
        </DateRow>

        <ChartBox $h={178}>
          <FlowHead>
            <FlowPicker>深股通资金动向<Caret $s={5.5} /></FlowPicker>
            <FlowValue $c="#b5984c">{d.flow}</FlowValue>
            <FlowValue $c={d.flowTone}>{d.flowDelta}</FlowValue>
          </FlowHead>
          <FlowScale>{d.flowMax}</FlowScale>
          <FlowScale $bottom>{d.flowMin}</FlowScale>
          <FlowPlot d={d} />
        </ChartBox>

        <Chips>
          <Chip>
            <Glyph $w={22} $h={19} viewBox="0 0 22 19" strokeWidth="2.100">
              <path d="M6.500 19V1.500M1 7L6.500 1.500L9.500 4.500M15 0V17.500M12.500 14.500L15.500 17.500L21 12" />
            </Glyph>
            趋势顶底
            <NewTag>NEW</NewTag>
          </Chip>
          <Chip>
            <Glyph $w={20} $h={20} viewBox="0 0 20 20" strokeWidth="2.300">
              <circle cx="13.500" cy="6.500" r="5.200" />
              <path d="M9.500 10.500L1 19M5.500 14.500L8.500 18M3 17L5 19" />
            </Glyph>
            主力密码
          </Chip>
          <Chip>
            <Glyph $w={23} $h={15} viewBox="0 0 23 15" color="#2f74e8">
              <path d="M3 3L11.500 11.500L20 3" strokeWidth="2.600" />
              <g fill="currentColor" stroke="none">
                <circle cx="3" cy="3" r="3" /><circle cx="20" cy="3" r="3" /><circle cx="11.500" cy="11.500" r="3" />
              </g>
            </Glyph>
            神奇九转
          </Chip>
          <ChipRule />
          <Chip>
            <Glyph $w={23} $h={23} viewBox="0 0 23 23" color="#3b7de4" strokeWidth="1.900">
              <circle cx="11.500" cy="11.500" r="10.500" />
              <path d="M11.500 1V7M11.500 16V22M1 11.500H7M16 11.500H22" />
              <circle cx="11.500" cy="11.500" r="1.500" fill="currentColor" stroke="none" />
            </Glyph>
            个股雷达
          </Chip>
        </Chips>
        <Gap $h={d.gap}>{d.peek && <Peek />}</Gap>

        <TradeBar>
          <IndexCell>
            <IndexLine>
              {d.index}
              <Glyph $w={15} $h={8} viewBox="0 0 15 8"><path d="M0 8L7.500 1L15 8" strokeWidth="1.700" /></Glyph>
            </IndexLine>
            <IndexName>深证成指<IndexPct>{d.indexPct}</IndexPct></IndexName>
          </IndexCell>
          <TradeCell>买</TradeCell>
          <TradeCell>卖</TradeCell>
          <TradeCell>撤</TradeCell>
          <MoreCell>
            <Glyph $w={31} $h={31} viewBox="0 0 31 31">
              <circle cx="15.500" cy="15.500" r="14.400" strokeWidth="2" />
              <g fill="currentColor" stroke="none">
                <circle cx="9.500" cy="15.500" r="1.500" /><circle cx="15.500" cy="15.500" r="1.500" /><circle cx="21.500" cy="15.500" r="1.500" />
              </g>
            </Glyph>
            <span>更多</span>
          </MoreCell>
        </TradeBar>

        <SystemNav>
          <Glyph $w={28} $h={23} viewBox="0 0 28 23" strokeWidth="3.600" strokeLinecap="round">
            <path d="M2 2H26M2 11.500H26M2 21H26" />
          </Glyph>
          <Glyph $w={35} $h={27} viewBox="0 0 35 27" strokeWidth="3.400" strokeLinecap="round" strokeLinejoin="round">
            <path d="M2 14L17.500 2L33 14M6.500 18V23Q6.500 25.300 9 25.300H26Q28.500 25.300 28.500 23V18" />
          </Glyph>
          <Glyph $w={29} $h={26} viewBox="0 0 29 26" strokeWidth="3.400" strokeLinecap="round" strokeLinejoin="round">
            <path d="M2 5H25Q27 5 27 7V22Q27 24 25 24H7M2 5L8 1.500" />
          </Glyph>
        </SystemNav>
      </Screen>
    </Frame>
  );
}

export default function App() {
  return (
    <>
      <Global />
      <Stage>
        <Phone d={left} />
        <Phone d={right} />
      </Stage>
    </>
  );
}
